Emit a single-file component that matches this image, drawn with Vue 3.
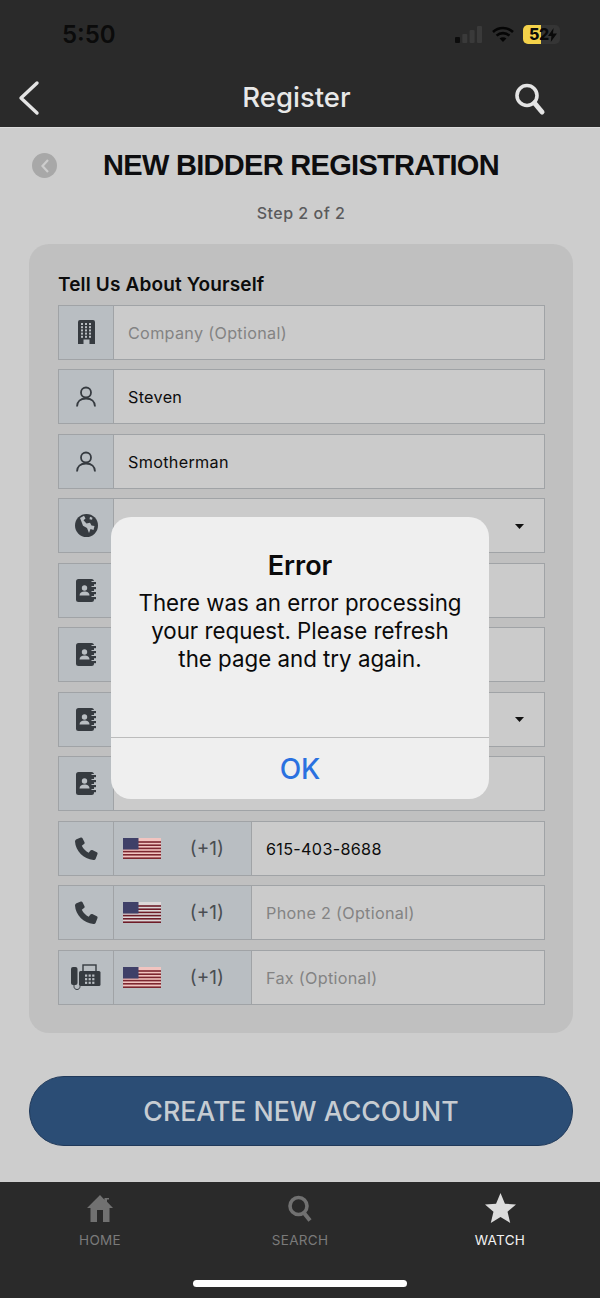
<template>
  <div class="screen">
    <header class="top">
      <div class="status">
        <span class="clock">5:50</span>
        <div class="status-icons">
          <svg width="27" height="17" viewBox="0 0 27 17">
            <rect x="0" y="11" width="5" height="6" rx="1" fill="#0c0c0c" />
            <rect x="7.300" y="8" width="5" height="9" rx="1" fill="#3a3a3a" />
            <rect x="14.600" y="4" width="5" height="13" rx="1" fill="#3a3a3a" />
            <rect x="22" y="0" width="5" height="17" rx="1" fill="#3a3a3a" />
          </svg>
          <svg width="22" height="17" viewBox="0 0 22 17">
            <path d="M1 6a14.500 14.500 0 0 1 20 0" fill="none" stroke="#050505" stroke-width="2.600" />
            <path d="M4.600 9.600a9.400 9.400 0 0 1 12.800 0" fill="none" stroke="#050505" stroke-width="2.600" />
            <path d="M7.600 12.600 11 16l3.400-3.400a4.800 4.800 0 0 0-6.800 0z" fill="#050505" />
          </svg>
          <div class="battery">
            <div class="battery-fill"></div>
            <span class="battery-num">52</span>
            <svg class="bolt" width="9" height="14" viewBox="0 0 9 14"><path d="M5.600 0 0 8h3.400L2.800 14 9 5.600H5z" fill="#0a0a0a" /></svg>
          </div>
        </div>
      </div>
      <nav class="nav">
        <svg class="nav-back" width="22" height="36" viewBox="0 0 22 36">
          <path d="M19 3 3 18l16 15" fill="none" stroke="#e4e4e4" stroke-width="3.400" stroke-linecap="round" stroke-linejoin="round" />
        </svg>
        <span class="nav-title">Register</span>
        <svg class="nav-search" width="32" height="34" viewBox="0 0 32 34">
          <circle cx="13" cy="13.500" r="10" fill="none" stroke="#e4e4e4" stroke-width="3.600" />
          <path d="M20.500 21 28 30" fill="none" stroke="#e4e4e4" stroke-width="5" stroke-linecap="round" />
        </svg>
      </nav>
    </header>

    <main class="content">
      <div class="heading">
        <span class="heading-back">
          <svg width="10" height="16" viewBox="0 0 10 16"><path d="M8 2 2.500 8 8 14" fill="none" stroke="#cdcdcd" stroke-width="2.200" /></svg>
        </span>
        <h1>NEW BIDDER REGISTRATION</h1>
      </div>
      <p class="step">Step 2 of 2</p>

      <section class="panel">
        <h2>Tell Us About Yourself</h2>
        <div class="rows">
          <div v-for="row in rows" :key="row.id" class="row">
            <div class="addon">
              <svg v-if="row.icon === 'building'" width="17" height="24" viewBox="0 0 17 24">
                <path d="M2 0h13a2 2 0 0 1 2 2v22h-5.500v-4.500h-6V24H0V2a2 2 0 0 1 2-2z" fill="#363b40" />
                <g fill="#b9bec2">
                  <rect v-for="d in dots" :key="d.k" :x="d.x" :y="d.y" width="2" height="2" />
                </g>
              </svg>
              <svg v-else-if="row.icon === 'user'" width="20" height="21" viewBox="0 0 20 21">
                <circle cx="10" cy="6.500" r="5" fill="none" stroke="#363b40" stroke-width="1.800" />
                <path d="M1 20.500c0-5 3.500-8 9-8s9 3 9 8" fill="none" stroke="#363b40" stroke-width="1.800" />
              </svg>
              <svg v-else-if="row.icon === 'globe'" width="23" height="23" viewBox="0 0 23 23">
                <circle cx="11.500" cy="11.500" r="11.500" fill="#363b40" />
                <path d="M5 4 9 1.800l1.500 2.700-2 1.800 3 3.200 3.500-.8 1.500 2.800 3 .6-1 3.900-3-1-1.500 4-2-5-4-2.200-1.500-4zM15 2.800l2.500 1-.5 2-2.500-.5z" fill="#b9bec2" />
              </svg>
              <svg v-else-if="row.icon === 'book'" width="20" height="23" viewBox="0 0 20 23">
                <rect x="0" y="0" width="18" height="23" rx="2.500" fill="#363b40" />
                <circle cx="8.500" cy="9" r="2.700" fill="#b9bec2" />
                <path d="M3.500 16.500c0-2.800 2.200-4 5-4s5 1.200 5 4z" fill="#b9bec2" />
                <g v-for="y in bookTabs" :key="y">
                  <rect x="15.500" :y="y - 1" width="2.500" height="1" fill="#b9bec2" />
                  <rect x="15.500" :y="y" width="4.500" height="2.200" fill="#363b40" />
                </g>
              </svg>
              <svg v-else-if="row.icon === 'phone'" width="23" height="23" viewBox="0 0 23 23">
                <path d="M5.800.6 1.500 2.200C.500 2.700 0 3.500 0 4.600 .6 14 8.600 22.400 18.400 23c1.100 0 2-.6 2.400-1.600l1.700-4.300c.2-.8 0-1.500-.7-1.900l-4.500-2.100c-.7-.3-1.400-.1-1.900.5l-1.700 2.200c-3-1.500-5.400-3.900-6.900-7l2.200-1.800c.6-.5.800-1.200.5-1.800L7.500 1.200C7.100.6 6.500.4 5.800.6z" fill="#363b40" />
              </svg>
              <svg v-else width="30" height="26" viewBox="0 0 30 26">
                <rect x="0" y="3" width="6.500" height="18" rx="2" fill="#363b40" />
                <path d="M3 21v1.500c0 4 6 4 6 0V22" fill="none" stroke="#363b40" stroke-width="1" />
                <rect x="8" y="7" width="21.500" height="15" rx="1.500" fill="#363b40" />
                <rect x="12" y="1" width="13" height="7" fill="none" stroke="#363b40" stroke-width="1.400" />
                <g fill="#b9bec2">
                  <rect v-for="k in keys" :key="k.k" :x="k.x" :y="k.y" width="2.200" height="2.200" />
                </g>
              </svg>
            </div>
            <div v-if="row.dial" class="dial">
              <svg class="flag" width="38" height="21" viewBox="0 0 38 21">
                <rect width="38" height="21" :fill="row.pale ? '#f1c4c0' : '#ddd8d8'" />
                <rect v-for="s in stripes" :key="s" x="0" :y="s" width="38" height="1.600" :fill="row.pale ? '#7c2630' : '#6e1c28'" />
                <rect width="15.500" height="11.500" fill="#3f4068" />
              </svg>
              <span class="code">(+1)</span>
            </div>
            <div class="field" :class="{ placeholder: row.placeholder }">
              <span>{{ row.text }}</span>
              <svg v-if="row.caret" class="caret" width="9" height="5" viewBox="0 0 9 5"><path d="M0 0h9L4.500 5z" fill="#111" /></svg>
            </div>
          </div>
        </div>
      </section>

      <button class="create">CREATE NEW ACCOUNT</button>
    </main>

    <footer class="tabs">
      <div class="tab-row">
        <div v-for="t in tabs" :key="t.label" class="tab" :class="{ active: t.active }">
          <svg v-if="t.label === 'HOME'" width="26" height="30" viewBox="0 0 26 30">
            <path d="M13 2 0 15h3.500v14H10V17h6v12h6.500V15H26l-6-6.200V6.500h2V5h-4.500v1.800z" fill="#717171" />
          </svg>
          <svg v-else-if="t.label === 'SEARCH'" width="24" height="30" viewBox="0 0 24 30">
            <circle cx="10.500" cy="13" r="8.500" fill="none" stroke="#717171" stroke-width="3.600" />
            <path d="M16 20 22 27.500" fill="none" stroke="#717171" stroke-width="4" />
          </svg>
          <svg v-else width="31" height="30" viewBox="0 0 30 29">
            <path d="M15 0l4.300 10.300 10.700.8-8.200 7 2.600 10.900L15 23.200 5.600 29l2.600-10.900-8.200-7 10.700-.8z" fill="#dcdcdc" />
          </svg>
          <span>{{ t.label }}</span>
        </div>
      </div>
      <div class="home-bar"></div>
    </footer>

    <div class="alert">
      <div class="alert-body">
        <h3>Error</h3>
        <p>There was an error processing your request. Please refresh the page and try again.</p>
      </div>
      <div class="alert-action">OK</div>
    </div>
  </div>
</template>

<script setup>
const rows = [
  { id: 1, icon: 'building', text: 'Company (Optional)', placeholder: true },
  { id: 2, icon: 'user', text: 'Steven' },
  { id: 3, icon: 'user', text: 'Smotherman' },
  { id: 4, icon: 'globe', text: '', caret: true },
  { id: 5, icon: 'book', text: '' },
  { id: 6, icon: 'book', text: '' },
  { id: 7, icon: 'book', text: '', caret: true },
  { id: 8, icon: 'book', text: '' },
  { id: 9, icon: 'phone', text: '615-403-8688', dial: true, pale: true },
  { id: 10, icon: 'phone', text: 'Phone 2 (Optional)', placeholder: true, dial: true },
  { id: 11, icon: 'fax', text: 'Fax (Optional)', placeholder: true, dial: true, pale: true }
]

const stripes = [3.200, 6.400, 9.600, 12.800, 16, 19.400]
const bookTabs = [3, 8, 13, 18]

// window grid on the building icon
const dots = []
for (let r = 0; r < 5; r++) {
  for (let c = 0; c < 3; c++) {
    dots.push({ k: `${r}-${c}`, x: 3 + c * 4, y: 3 + r * 3.200 })
  }
}

// keypad on the fax icon
const keys = []
for (let r = 0; r < 3; r++) {
  for (let c = 0; c < 3; c++) {
    keys.push({ k: `${r}-${c}`, x: 14 + c * 3.600, y: 10.500 + r * 3.600 })
  }
}

const tabs = [
  { label: 'HOME' },
  { label: 'SEARCH' },
  { label: 'WATCH', active: true }
]
</script>

<style>
html, body {
  margin: 0;
  background: #cdcdcd;
}
</style>

<style scoped>
.screen {
  position: relative;
  width: 600px;
  height: 1298px;
  display: flex;
  flex-direction: column;
  overflow: hidden;
  background: #cdcdcd;
  font-family: Inter, "Liberation Sans", sans-serif;
}

.top {
  height: 127px;
  background: #2a2a2a;
  border-bottom: 1px solid #dcdcdc;
  flex-shrink: 0;
}

.status {
  height: 68px;
  display: flex;
  justify-content: space-between;
  align-items: center;
  padding: 0 40px 0 62px;
}

.clock {
  font-size: 24px;
  font-weight: 600;
  color: #0b0b0b;
}

.status-icons {
  display: flex;
  align-items: center;
  gap: 9.500px;
}

.battery {
  position: relative;
  width: 37px;
  height: 19px;
  border-radius: 5px;
  background: #353535;
  overflow: hidden;
}

.battery-fill {
  width: 18px;
  height: 100%;
  background: #f4d24a;
}

.battery-num {
  position: absolute;
  left: 6px;
  top: 0;
  font-size: 16px;
  line-height: 19px;
  font-weight: 800;
  letter-spacing: -0.5px;
  color: #0a0a0a;
}

.bolt {
  position: absolute;
  right: 3px;
  top: 3px;
}

.nav {
  height: 59px;
  display: flex;
  align-items: center;
  justify-content: space-between;
  padding: 0 54px 0 18px;
  position: relative;
}

.nav-title {
  position: absolute;
  left: 0;
  right: 7px;
  top: 11px;
  text-align: center;
  font-size: 27.500px;
  font-weight: 500;
  line-height: 36px;
  color: #e8e8e8;
}

.nav-search {
  margin-top: 2px;
}

.content {
  flex: 1;
  padding: 0 27px 0 29px;
  display: flex;
  flex-direction: column;
}

.heading {
  height: 75px;
  display: flex;
  align-items: center;
  position: relative;
}

.heading h1 {
  width: 100%;
  margin: 0;
  text-align: center;
  font-family: "Liberation Sans", Arial, sans-serif;
  font-size: 29px;
  font-weight: 700;
  letter-spacing: -0.700px;
  color: #0d0d0f;
}

.heading-back {
  position: absolute;
  left: 3px;
  top: 25px;
  width: 25px;
  height: 25px;
  border-radius: 50%;
  background: #a8a8a8;
  display: flex;
  align-items: center;
  justify-content: center;
}

.step {
  margin: 0;
  height: 41px;
  text-align: center;
  font-size: 16px;
  font-weight: 500;
  line-height: 21px;
  letter-spacing: 0.500px;
  color: #5a5a5c;
}

.panel {
  width: 544px;
  height: 789px;
  box-sizing: border-box;
  padding: 29px 28px 0 29px;
  background: #c0c0c0;
  border-radius: 20px;
}

.panel h2 {
  margin: 0 0 8.800px;
  height: 23px;
  font-size: 19px;
  line-height: 23px;
  font-weight: 600;
  letter-spacing: 0.150px;
  color: #0c0c0c;
}

.rows {
  display: flex;
  flex-direction: column;
  gap: 9.500px;
}

.row {
  height: 55px;
  box-sizing: border-box;
  display: flex;
  border: 1px solid #a0a3a6;
}

.addon {
  width: 54px;
  flex-shrink: 0;
  display: flex;
  align-items: center;
  justify-content: center;
  background: #b9bec2;
  border-right: 1px solid #a0a3a6;
}

.dial {
  width: 138px;
  flex-shrink: 0;
  box-sizing: border-box;
  display: flex;
  align-items: center;
  justify-content: space-between;
  padding: 0 27px 0 9px;
  background: #b9bec2;
  border-right: 1px solid #a0a3a6;
}

.code {
  font-size: 19px;
  color: #4a4e52;
}

.field {
  flex: 1;
  display: flex;
  align-items: center;
  justify-content: space-between;
  padding: 1px 20px 0 14px;
  background: #cbcbcb;
  font-size: 16.200px;
  letter-spacing: 0.300px;
  color: #0d0d0d;
}

.field.placeholder {
  color: #838383;
}

.create {
  margin-top: 43px;
  width: 544px;
  height: 70px;
  flex-shrink: 0;
  border: 1px solid #20395a;
  border-radius: 35px;
  background: #2b4d75;
  color: #c6ccd2;
  font-family: Inter, sans-serif;
  font-size: 26.700px;
  font-weight: 500;
}

.tabs {
  position: relative;
  height: 116px;
  flex-shrink: 0;
  background: #2a2a2a;
  border-top: 1px solid #cfcfcf;
}

.tab-row {
  display: flex;
  padding-top: 11px;
}

.tab {
  width: 200px;
  display: flex;
  flex-direction: column;
  align-items: center;
  gap: 8.500px;
  font-size: 13.500px;
  letter-spacing: 0.300px;
  line-height: 17px;
  color: #7a7a7a;
}

.tab.active {
  color: #f2f2f2;
}

.home-bar {
  position: absolute;
  left: 193px;
  bottom: 11px;
  width: 214px;
  height: 7px;
  border-radius: 4px;
  background: #fff;
}

.alert {
  position: absolute;
  left: 111px;
  top: 517px;
  width: 378px;
  height: 282px;
  display: flex;
  flex-direction: column;
  border-radius: 20px;
  background: #efefef;
  color: #0a0a0a;
  text-align: center;
}

.alert-body {
  height: 221px;
  box-sizing: border-box;
  padding-top: 32px;
  border-bottom: 1px solid #bcbcbc;
}

.alert h3 {
  margin: 0;
  font-size: 27px;
  line-height: 34px;
  font-weight: 600;
}

.alert p {
  margin: 6px 26px 0;
  font-size: 22.300px;
  line-height: 28px;
}

.alert-action {
  flex: 1;
  display: flex;
  align-items: center;
  justify-content: center;
  font-size: 28px;
  font-weight: 500;
  color: #2a71e0;
}
</style>
